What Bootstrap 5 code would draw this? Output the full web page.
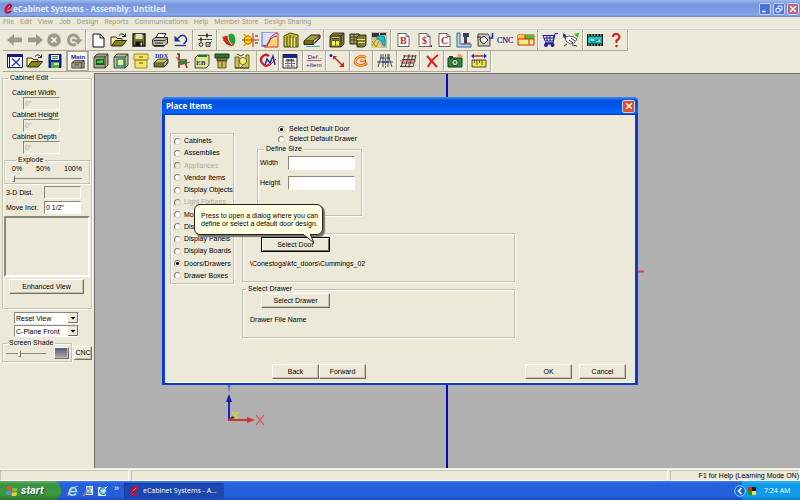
<!DOCTYPE html>
<html lang="en">
<head>
<meta charset="utf-8">
<meta name="viewport" content="width=device-width, initial-scale=1">
<title>eCabinet Systems - Assembly: Untitled</title>
<link href="https://cdn.jsdelivr.net/npm/bootstrap@5.3.0/dist/css/bootstrap.min.css" rel="stylesheet">
<style>
:root{--face:#ece9d8;--shadow:#aca899;--dark:#716f64}
body{font:7px/10px "Liberation Sans",Arial,sans-serif;color:#000;background:var(--face)}
.app-ui{height:100vh}
button,input,select{font:inherit;color:inherit;border-radius:0}
.title-main{height:17px;padding:0 1px 0 4px;font:bold 8px/16px "Open Sans",sans-serif;color:#e3ecfc;background:linear-gradient(#9db9ea,#7795df 25%,#7e9ee6 75%,#86a7ec 88%,#6580ce)}
.title-main svg{width:9px;height:11px}
.cap-btn{width:12px;height:12px;padding:0;border:1px solid #c5d3f5;border-radius:2px;background:#4a72dc;line-height:0}
.cap-btn svg{width:10px;height:10px}
.cap-close{background:#b26a7c}
.cap-set{gap:2px}
.menus{height:13px;padding-left:3px;gap:6px;font:7px/11px "Roboto",sans-serif;border-bottom:1px solid #c9d3de}
.menus a{color:#9d9a8c;text-decoration:none}
.tools{height:21px;padding-left:3px}
.tools + .tools{height:22px}
.grp{height:21px;padding:0 1px 0 2px;border-right:1px solid var(--shadow);border-bottom:1px solid var(--shadow);box-shadow:1px 0 #fff;display:flex;align-items:center}
.grp button{flex:1 1 0;min-width:0;padding:0;border:0;background:none;line-height:0;display:flex;justify-content:center;align-items:center}
.grp svg{width:18px;height:16px;flex:none}
.w22{width:22px}.w24{width:24px}.w44{width:45px}.w64{width:64px}.w67{width:67px}.w83{width:83px}.w107{width:107px}.w147{width:147px}.w168{width:168px}.w212{width:212px}
.w212 .grp{flex:1 1 0;min-width:0;padding:0 1px}
.on-btn{background:#f8f7f0 !important;border:1px solid var(--shadow) !important;height:20px}
.work{min-height:0}
.side{width:94px;flex:none;padding:1px 2px 0}
.etch{border:1px solid #c4c1b2;box-shadow:1px 1px #fff,inset 1px 1px #fff;margin:0;padding:0;min-width:0}
.etch > legend{float:none;width:auto;font-size:7px;line-height:8px;margin:0 0 0 4px;padding:0 2px}
.sunk{border:1px solid;border-color:#8b887b #fff #fff #8b887b;background:#fff;height:13px;padding:0 1px;min-width:0;border-radius:0}
.sunk:disabled{background:var(--face);color:#aca899;opacity:1}
.dim-box{width:37px}
.push{border:1px solid;border-color:#fff #716f64 #716f64 #fff;box-shadow:inset -1px -1px #c4c0b0;background:var(--face);height:15px;padding:0;line-height:12px;text-align:center}
.edit-set{padding:6px 1px 14px}
.dims{padding-left:8px}
.dims label{line-height:9px}
.dims .dim-box{margin-left:11px}
.explode{margin-top:2px;padding:0 7px 1px}
.explode .slide{width:70px}
.line{display:flex;justify-content:space-between;padding:0 9px 0 2px;margin-top:2px;line-height:13px}
.preview-box{height:61px;margin:2px 0;border:2px solid;border-color:#8b887b #fff #fff #8b887b}
.w-enh{width:75px;margin:2px 0 0 5px}
.combos{width:65px;margin:3px 0 0 12px;gap:1px}
.combo{position:relative;height:12px}
.combo select{appearance:none;width:100%;height:12px;border:1px solid;border-color:#8b887b #fff #fff #8b887b;background:#fff;padding:0 0 0 1px;line-height:9px;display:block}
.combo svg{position:absolute;right:1px;top:1px;width:10px;height:10px;pointer-events:none}
.slide{appearance:none;height:8px;margin:0;background:linear-gradient(#8b887b,#8b887b) 0 50%/100% 1px no-repeat;display:block}
.slide::-webkit-slider-thumb{appearance:none;width:3px;height:7px;background:var(--face);border:1px solid;border-color:#fff #716f64 #716f64 #fff}
.shade-row{margin-top:2px;gap:2px}
.shade{width:70px}
.shade > div{padding:0 2px 2px 3px;gap:8px}
.shade .slide{width:40px}
.cnc-btn{width:18px;height:14px;margin-bottom:2px}
.swatch{width:17px;height:12px;background:linear-gradient(#5b5b73,#a9a9b4)}
.view3d{background:#b0b0b0;border-left:1px solid #716f64;border-top:1px solid #716f64;position:relative;overflow:hidden;margin-bottom:1px}
.scene{position:absolute;inset:0;width:100%;height:100%}
.dlg{position:absolute;left:67px;top:23px;width:476px;border:solid #0b3bd0;border-width:0 3px 2px;border-radius:5px 5px 0 0;background:var(--face);box-shadow:inset 0 -1px #fff}
.dlg-title{height:18px;margin:0 -3px;padding:0 3px 0 4px;border-radius:5px 5px 0 0;background:linear-gradient(#3d8cf8,#0450dc 20%,#0357ee 60%,#0465fd 88%,#0338b8);color:#fff;font:bold 8px/18px "Open Sans",sans-serif}
.dlg-title .cap-btn{width:13px;height:13px;background:#df4f2c}
.dlg-body{padding:9px 9px 4px 5px}
.kinds{width:64px;height:151px;margin-top:9px;padding:2px 0 2px 3px;flex:none}
.opt{display:flex;align-items:center;gap:4px;white-space:nowrap;height:10px}
.opt input{appearance:none;width:7px;height:7px;margin:0;border:1px solid;border-color:#807d70 #d8d5c6 #d8d5c6 #807d70;border-radius:50%;background:#fff;flex:none}
.opt input:checked{background:radial-gradient(circle,#000 0 1px,#fff 2px)}
.opt input:disabled{background:var(--face)}
.opt input:disabled + span{color:#aca899}
.kinds .opt{gap:3px}
.pick-top{padding-left:36px}
.size-set{width:105px;height:67px;margin:1px 0 0 15px;padding-left:2px}
.sz{padding-top:6px}
.size-set .sz:first-of-type{padding-top:3px}
.wid-lab{width:28px}
.size-in{width:67px;height:14px}
.size-set{height:71px}
.file-set{width:273px;height:53px;padding-left:7px}
.file-set > legend{margin-left:-4px}
.file-set .push{width:69px;margin-left:11px;display:block}
.door-set{margin-top:13px}
.drawer-set{margin-top:3px}
.file-set .fname{margin-top:7px;line-height:10px}
.focus-push{border:1px solid #000;box-shadow:inset 1px 1px #fff,inset -1px -1px #716f64}
.foot{padding-left:102px;margin-top:26px}
.foot .push{width:47px}
.last-push{margin-left:7px}
.tip{position:absolute;left:99px;top:130px;width:129px}
.tip p{background:#ffffe1;border:1px solid #222;border-radius:6px;padding:7px 5px 5px 6px;line-height:8px;box-shadow:2px 2px 1px #77746a;font-size:7px;height:31px;white-space:nowrap}
.tip svg{position:absolute;left:108px;top:29px;width:16px;height:12px}
.status{height:12px;line-height:10px;border-top:1px solid #fff;gap:2px}
.status > div{border:1px solid;border-color:#c4c1b2 #fff #fff #c4c1b2}
.st-a{width:129px}.st-c{width:130px}
.taskbar{height:19px;background:linear-gradient(#3f7eee,#2560dd 15%,#245edb 80%,#1c48b8);color:#fff}
.start{width:61px;height:19px;border:0;padding:0 0 0 6px;border-radius:0 8px 8px 0;background:linear-gradient(#66b063,#3b9140 20%,#3d9a3f 70%,#2c7430);color:#fff;font:italic bold 11px/17px "Roboto",sans-serif;text-shadow:1px 1px 1px #1d4f20;gap:3px}
.start svg{width:12px;height:12px}
.quick{width:63px;padding-left:6px;gap:3px}
.quick button{border:0;padding:0;background:none;line-height:0}
.quick svg{width:12px;height:12px}
.quick span{font-size:9px;margin:-5px 0 0 2px}
.task{width:100px;height:16px;border:0;border-radius:2px;background:#1b47ae;color:#fff;box-shadow:inset 1px 1px #163a92;font:7px/14px "Open Sans",sans-serif;padding:0 0 0 6px}
.task svg{width:9px;height:11px}
.tray{width:58px;background:linear-gradient(#2cb6f6,#119ae9 20%,#109be9 80%,#0d7cc6);font:7px/18px "Open Sans",sans-serif;margin-left:auto}
.tray svg{width:24px;height:14px;margin-left:-8px}
.tray span{margin-left:6px}
</style>
<script src="https://cdn.jsdelivr.net/npm/bootstrap@5.3.0/dist/js/bootstrap.bundle.min.js"></script>
</head>
<body>
<svg class="d-none" aria-hidden="true">
<symbol id="logo" viewBox="0 0 9 11"><path d="M2.500 6Q7.500 5 7 2.500Q6 .5 3.500 3Q.5 6.500 2 9Q4 10.500 7 8" fill="none" stroke="#d4102c" stroke-width="2.200"/><path d="M3.500 5.500L6 3" stroke="#fff" stroke-width=".6"/></symbol>
<symbol id="back" viewBox="0 0 18 16"><path d="M1 8L8 2V5.500H16V10.500H8V14Z" fill="#9d9a8c"/><path d="M8 14.500V11H16.500" stroke="#fff" fill="none" stroke-width=".7"/></symbol>
<symbol id="fwd" viewBox="0 0 18 16"><path d="M17 8L10 2V5.500H2V10.500H10V14Z" fill="#9d9a8c"/><path d="M2 11H10" stroke="#fff" stroke-width=".7"/></symbol>
<symbol id="stop" viewBox="0 0 18 16"><circle cx="9" cy="8" r="6.800" fill="#9d9a8c"/><path d="M6.500 5.500L11.500 10.500M11.500 5.500L6.500 10.500" stroke="#fff" stroke-width="1.700"/></symbol>
<symbol id="again" viewBox="0 0 18 16"><path d="M13.500 8A5 5 0 1 0 11 12.300" fill="none" stroke="#9d9a8c" stroke-width="3"/><path d="M8 7.500H18L13 12.500Z" fill="#9d9a8c"/><circle cx="8.500" cy="8" r="1.500" fill="#9d9a8c"/></symbol>
<symbol id="new" viewBox="0 0 18 16"><path d="M4 2H11L15 6V15H4Z" fill="#fff"/><path d="M4 15V2H11M11 2V6H15M15 6V15H4" fill="none" stroke="#111"/><path d="M11 2L15 6" stroke="#111"/></symbol>
<symbol id="open" viewBox="0 0 18 16"><path d="M1 14V5H6L7 6.500H12V9" fill="#f4ef8a" stroke="#333"/><path d="M1.500 14L5.500 8.500H16.500L12 14Z" fill="#8c8414" stroke="#222"/><path d="M9 3.500Q12 0 15 4M15.500 1.500V4.500H12" fill="none" stroke="#222"/></symbol>
<symbol id="save" viewBox="0 0 18 16"><path d="M3 2H15V14H3Z" fill="#77771a" stroke="#111" stroke-width="1.300"/><path d="M5.500 2H12.500V7H5.500Z" fill="#dcdcc8"/><path d="M5.500 9.500H13V14H5.500Z" fill="#111"/><path d="M10.500 10.500H12V13.500H10.500Z" fill="#eee"/></symbol>
<symbol id="print" viewBox="0 0 18 16"><path d="M5 6L7 1.500H15L12.500 6.500" fill="#fff" stroke="#333"/><path d="M1.500 8L4 5.500H16.500V11L14 13.500H2Z" fill="#bbb8a8" stroke="#222"/><path d="M3 8.500H14L16 6.500M4 11H12" stroke="#333" fill="none"/><path d="M10 9.500H12" stroke="#dc3"/><path d="M3 14.500H13" stroke="#555"/></symbol>
<symbol id="undo" viewBox="0 0 18 16"><path d="M4 8L8.500 4Q12 2 14 5.500T11.500 12" fill="none" stroke="#17349b" stroke-width="1.500"/><path d="M2.500 3.500V9.500H8.500Z" fill="#17349b"/><path d="M3 13.500H14" stroke="#17349b" stroke-width="1.300"/></symbol>
<symbol id="checks" viewBox="0 0 18 16"><path d="M2 3.500H16M2 7.500H16" stroke="#222" stroke-width=".8"/><path d="M11 1.500V5.500M5 5.500V9.500" stroke="#222" stroke-width="1.600"/><circle cx="5" cy="12.500" r="1.800" fill="none" stroke="#222"/><path d="M10 10.500H14V14.500H10Z" fill="none" stroke="#222" stroke-width=".8"/><path d="M10.500 12L12 13.500L15.500 9.500" fill="none" stroke="#222" stroke-width=".8"/></symbol>
<symbol id="palette" viewBox="0 0 18 16"><path d="M2 5L9 3L15 11L13 14Q9 14 6 12Z" fill="#e02a22"/><path d="M3 8L12 14M5 6L13 12" stroke="#921511" stroke-width=".7"/><path d="M8 3Q12 0 14 3T15 11L12 13Q7 8 8 3Z" fill="#20a32f"/><path d="M8 3Q7 8 12 13" stroke="#fff" stroke-width=".8" fill="none"/></symbol>
<symbol id="snap" viewBox="0 0 18 16"><circle cx="7" cy="8" r="4" fill="#ffd800" stroke="#a77c00"/><path d="M3 2Q4 5 8 3.500M3 14Q4 11 8 12.500" fill="none" stroke="#e0a000" stroke-width="1.500"/><path d="M1 8H18M12 1V15" stroke="#d52422"/><path d="M14 4H17M14 11H17" stroke="#222"/></symbol>
<symbol id="curve" viewBox="0 0 18 16"><path d="M1 0H17V15H1Z" fill="#dfe2ff"/><path d="M4 15Q5 6 17 2V15Z" fill="#f8d675"/><path d="M1 15V0H17" fill="none" stroke="#5c64d8"/><path d="M2 14Q9 13 9 8T17 1" fill="none" stroke="#ce3030"/><path d="M1 14H6Q8 5 16 4" fill="none" stroke="#444be0"/><path d="M17 1V15H3" fill="none" stroke="#d33"/></symbol>
<symbol id="crown" viewBox="0 0 18 16"><path d="M2 4L8 1L16 3V15H2Z" fill="#c8c044" stroke="#4a4610"/><path d="M5 4V15M8 3V15M11 4V15M14 5V15" stroke="#4a4610"/><path d="M9.500 6V15M12.500 6V15" stroke="#f4ed73" stroke-width="1.300"/></symbol>
<symbol id="board" viewBox="0 0 18 16"><path d="M1 9L8 3H17L10 9Z" fill="#a3a135" stroke="#222"/><path d="M1 9V12.500H10V9M10 12.500L17 6V3" fill="#6f6c18" stroke="#222"/><path d="M3 14.500H17" stroke="#3aa7a1"/></symbol>
<symbol id="cabA" viewBox="0 0 18 16"><path d="M2 4L5 1H16V12L13 15H2Z" fill="#7d7a2c" stroke="#111" stroke-width=".8"/><path d="M2 4H13V15M13 4L16 1M4 6.500H11M4 9H11" fill="none" stroke="#222" stroke-width=".8"/><path d="M4 5.500H11" stroke="#ccca7b"/><path d="M4 9H7V13.500H4ZM8 9H11V13.500H8Z" fill="#f4ed52"/></symbol>
<symbol id="cabB" viewBox="0 0 18 16"><path d="M1 2H10V12H1Z" fill="#a5a04b" stroke="#222"/><path d="M1 5H10M1 8H10M5 2V12" stroke="#222" stroke-width=".7"/><path d="M8 5L10 3H17V13L15 15H8Z" fill="#807b29" stroke="#111" stroke-width=".8"/><path d="M8 7.500H16M9 10.500H16" stroke="#ebe78b"/></symbol>
<symbol id="render" viewBox="0 0 18 16"><path d="M1 0H17V16H1Z" fill="#bdbcb2"/><path d="M2 1H9V5H2ZM10 1H16V3H10Z" fill="#333"/><path d="M7 4H14Q16 7 15 14Q12 14 12 9Q9 8 7 8Z" fill="#24bdc5" stroke="#13656c" stroke-width=".6"/><path d="M1 8H9L12 16H1Z" fill="#e0d276"/><path d="M2 9L6 15M6 8L2 14M9 9L6 15" stroke="#7a6d20" stroke-width=".7"/></symbol>
<symbol id="page" viewBox="0 0 18 16"><path d="M4 1.500H12L15 4.500V14.500H4Z" fill="#fff" stroke="#444" stroke-width=".8"/><path d="M12 1.500V4.500H15" fill="none" stroke="#444" stroke-width=".8"/></symbol>
<symbol id="ruler" viewBox="0 0 18 16"><path d="M2 1H5V12H16V15H2Z" fill="#9fe5e5" stroke="#203c8b" stroke-width=".8"/><path d="M8 1H14V5H12V11H9V5H8Z" fill="#374255"/><path d="M7 12L15 11" stroke="#c02c2c"/></symbol>
<symbol id="mach" viewBox="0 0 18 16"><path d="M2 2H12L14 5V14H2Z" fill="#c8c8c0" stroke="#222" stroke-width=".8"/><path d="M1 5H5M4 7L8 4L12 8L8 12L5 10Z" stroke="#222" fill="#eee"/><path d="M13 6H16.500V1" stroke="#1731b2" stroke-width="1.600" fill="none"/></symbol>
<symbol id="nest" viewBox="0 0 18 16"><path d="M1 3H17V13H1Z" fill="#f7ee83" stroke="#c72a1d"/><path d="M8 3H17V7H8Z" fill="#37cf25"/><path d="M1 3H8V7H1Z" fill="#ffc83c"/><path d="M1 7H17M8 3V7M12 7V13" stroke="#d1261a"/></symbol>
<symbol id="cart" viewBox="0 0 18 16"><path d="M2 3.500H13L12 9H4Z" fill="#e9ebfa" stroke="#1a1b9b"/><path d="M17 1.500H14L12 11H4M3 6H13M6 3V9M9 3V9" fill="none" stroke="#1a1b9b"/><path d="M4 11.500H12" stroke="#1a1b9b" stroke-width="2"/><circle cx="5" cy="13" r="2" fill="#1a1b9b"/><circle cx="11.500" cy="13" r="2" fill="#1a1b9b"/></symbol>
<symbol id="shake" viewBox="0 0 18 16"><path d="M3 5L7 4L12 5L15 7L12 11L8 12L4 9Z" fill="#fff" stroke="#333" stroke-width=".8"/><path d="M7 8L11 11M9 6L13 9M2 14L5 12M10 13L15 14" stroke="#333"/><path d="M1 1L4 3V7L1 5Z" fill="#1a3fae"/><path d="M12 2L17 1L16 6Z" fill="#2ab532"/></symbol>
<symbol id="film" viewBox="0 0 18 16"><path d="M1 2H17V14H1Z" fill="#0b1514"/><path d="M2 4.500H16V11.500H2Z" fill="#20bcb6"/><path d="M2 3H17M2 13H17" stroke="#ece9d8" stroke-dasharray="1.500 1.500"/><path d="M3 8Q6 5 8 8T14 7V10H5Z" fill="#72f1e8"/><path d="M4 9L7 10L12 8" stroke="#0b6865" fill="none"/></symbol>
<symbol id="help" viewBox="0 0 18 16"><path d="M6 5Q6 2 9 2T12.500 5Q12.500 7 9.500 8.500V11" fill="none" stroke="#d1201c" stroke-width="2"/><circle cx="9.500" cy="14" r="1.300" fill="#d1201c"/></symbol>
<symbol id="winx" viewBox="0 0 18 16"><path d="M1.500 1.500H16.500V14.500H1.500Z" fill="#fff" stroke="#16197d"/><path d="M1 1H17V4H1Z" fill="#16197d"/><path d="M3.500 4V14" stroke="#16197d"/><path d="M6 5.500L14 13M14 5.500L6 13" stroke="#2540d9" stroke-width="1.500"/></symbol>
<symbol id="saveb" viewBox="0 0 18 16"><path d="M3 1.500H15V14.500H3Z" fill="#1725b0" stroke="#151a65"/><path d="M5 2H13V7H5Z" fill="#eee"/><path d="M6 3.500H12M6 5.500H12" stroke="#379044"/><path d="M5 9H13V15H5Z" fill="#42b255"/><path d="M8 10H13V12H8Z" fill="#f2ed68"/></symbol>
<symbol id="mainc" viewBox="0 0 18 18"><path d="M2 11L5 8.500H16V17H2Z" fill="#a39f80" stroke="#222" stroke-width=".8"/><path d="M2 11H13V17M5 13.500H10M13 11L16 8.500" stroke="#222" fill="none" stroke-width=".8"/></symbol>
<symbol id="cabG" viewBox="0 0 18 16"><path d="M2 4L5 1H16V12L13 15H2Z" fill="#a4a084" stroke="#222" stroke-width=".8"/><path d="M2 4H13V15M13 4L16 1" fill="none" stroke="#222" stroke-width=".8"/><path d="M4 6H12V12H4Z" fill="#155d1c"/><path d="M5 8L11 7V10H5Z" fill="#39d342"/></symbol>
<symbol id="cabT" viewBox="0 0 18 16"><path d="M2 4L5 1H16V12L13 15H2Z" fill="#c1bd98" stroke="#222" stroke-width=".8"/><path d="M2 4H13V15M13 4L16 1" fill="none" stroke="#222" stroke-width=".8"/><path d="M5 6H12V13H5Z" fill="#f8ec86" stroke="#15938f" stroke-width="1.600"/></symbol>
<symbol id="drawer" viewBox="0 0 18 16"><path d="M2 1H16V7H2ZM3 7H15V15H3Z" fill="#f3e463" stroke="#9e8b25"/><path d="M7 4H11M7 10H11" stroke="#665811"/></symbol>
<symbol id="ddx" viewBox="0 0 18 16"><path d="M2 10L6 6H16L12 10Z" fill="#c5be6b" stroke="#222" stroke-width=".8"/><path d="M2 10V14H12V10M12 14L16 10V6" fill="#77702b" stroke="#222" stroke-width=".8"/></symbol>
<symbol id="chair" viewBox="0 0 18 16"><path d="M4 1H6V7H13V9H6V15M12 9L14 15" fill="none" stroke="#68472a" stroke-width="1.700"/><path d="M3 4L8 10M7 12L17 9" stroke="#db2424"/><path d="M7 9H14V11H7Z" fill="#248a32"/></symbol>
<symbol id="eb" viewBox="0 0 18 16"><path d="M2 5L5 2H16V12L13 15H2Z" fill="#e7e37e" stroke="#222" stroke-width=".8"/><path d="M5 3H14" stroke="#167c34" stroke-width="2"/></symbol>
<symbol id="stool" viewBox="0 0 18 16"><path d="M2 1H16V5H2Z" fill="#267431" stroke="#174318"/><path d="M4 5H14V8H4Z" fill="#81822a" stroke="#333" stroke-width=".8"/><path d="M5 8H13V15H5Z" fill="#cbbf42" stroke="#333" stroke-width=".8"/><path d="M9 9V14" stroke="#5d5618"/></symbol>
<symbol id="clock" viewBox="0 0 18 16"><path d="M2 4H6V15H2ZM13 2H16V15H7L13 9Z" fill="#cfc44f" stroke="#4c4610" stroke-width=".8"/><circle cx="10" cy="8" r="3.600" fill="#f5ec7f" stroke="#595010" stroke-width=".8"/><path d="M2 15H16M4 1L8 3L11 1" fill="none" stroke="#4c4610"/></symbol>
<symbol id="cm" viewBox="0 0 18 16"><path d="M10 3Q6 0 3 4T5 12Q8 14 10 11" fill="none" stroke="#d2182d" stroke-width="2.200"/><path d="M6 12L8 6L11 10L14 3L16 12" fill="none" stroke="#1827a5" stroke-width="1.400"/><path d="M10 13L17 6" stroke="#d2182d"/></symbol>
<symbol id="sheet" viewBox="0 0 18 16"><path d="M2 1.500H16V15H2Z" fill="#fff" stroke="#222"/><path d="M2 2H16V5H2Z" fill="#1b2490"/><path d="M4 8H14M4 10.500H14M4 13H14M7 6V14M10.500 6V14" stroke="#555" stroke-width=".8"/><path d="M5 7H13" stroke="#111"/></symbol>
<symbol id="defitem" viewBox="0 0 18 18"><path d="M1 8.500H17" stroke="#a5203b" stroke-width=".8"/></symbol>
<symbol id="move" viewBox="0 0 18 16"><path d="M6 4L15 13" stroke="#db2421" stroke-width="1.500"/><path d="M5 3H9L5 7ZM16 14H11L16 9Z" fill="#db2421"/><circle cx="3" cy="2.500" r="1.500" fill="#1a23b8"/></symbol>
<symbol id="ring" viewBox="0 0 18 16"><path d="M14 4.500Q9 2 5 5Q1 9 5 11.500Q11 14 15 10M8 8H14" fill="none" stroke="#d04018" stroke-width="2.600"/><path d="M14 4.500Q9 2 5 5Q1 9 5 11.500Q11 14 15 10M8 8H13" fill="none" stroke="#ffb638" stroke-width="1.500"/></symbol>
<symbol id="mirror" viewBox="0 0 18 16"><path d="M5 1V4L2 14M7 1V14M12 1V14M13 1V5L16 14M1 9H17M4 5H14" fill="none" stroke="#22263d" stroke-width=".8"/><path d="M9.500 1V15" stroke="#d62c2c" stroke-dasharray="3 1"/><path d="M6 9H12" stroke="#283fbd" stroke-width="1.500"/></symbol>
<symbol id="array" viewBox="0 0 18 16"><path d="M4 3H17M3 6.500H16M2 10H15M1 13.500H14M6 2L2 14M10 2L6 14M14 2L10 14M17 2L14 14" stroke="#333" stroke-width=".9"/><path d="M10 1V15M1 8H17" stroke="#d52b2c" stroke-width=".8"/></symbol>
<symbol id="del" viewBox="0 0 18 16"><path d="M4 3L14 14M15 2Q8 7 5 14" fill="none" stroke="#df201a" stroke-width="2"/></symbol>
<symbol id="camera" viewBox="0 0 18 16"><path d="M2 5H16V14H2Z" fill="#2c8b3a" stroke="#153d18"/><path d="M3 3H7V5H3Z" fill="#333"/><circle cx="9" cy="9.500" r="3.200" fill="#d5e4cf" stroke="#173c1d"/><circle cx="9" cy="9.500" r="1.200" fill="#287132"/><path d="M12 1L16 4M15 1L13 4M11 3H17" stroke="#e3922e"/></symbol>
<symbol id="dim" viewBox="0 0 18 16"><path d="M3 3H15" stroke="#d6221b" stroke-width="1.500"/><path d="M1 3L4 .5V5.500ZM17 3L14 .5V5.500Z" fill="#1b30c2"/><path d="M2 7H16V14H2Z" fill="#f1e840" stroke="#222" stroke-width=".8"/><path d="M4.500 7V10M7 7V12M9.500 7V10M12 7V12" stroke="#333" stroke-width=".8"/></symbol>
<symbol id="ex" viewBox="0 0 10 10"><path d="M2.200 2.200L7.800 7.800M7.800 2.200L2.200 7.800" stroke="#fff" stroke-width="1.500"/></symbol>
<symbol id="drop" viewBox="0 0 10 10"><path d="M0 0H10V10H0Z" fill="#ece9d8"/><path d="M9.500 0V9.500H0" fill="none" stroke="#716f64"/><path d="M2.500 4H7.500L5 6.500Z"/></symbol>
</svg>
<div class="app-ui d-flex flex-column">
<header>
 <div class="title-main d-flex align-items-center"><svg><use href="#logo"/></svg><span class="me-auto">eCabinet Systems - Assembly: Untitled</span>
 <div class="cap-set d-flex"><button class="cap-btn" aria-label="Minimize"><svg viewBox="0 0 10 10"><path d="M2 7.500H5.500" stroke="#fff" stroke-width="1.600"/></svg></button><button class="cap-btn" aria-label="Restore"><svg viewBox="0 0 10 10"><path d="M4 4V2H8V6H6M2 4.500H6V8H2Z" fill="none" stroke="#fff"/></svg></button><button class="cap-btn cap-close" aria-label="Close"><svg><use href="#ex"/></svg></button></div></div>
 <nav class="menus d-flex"><a href="#">File</a><a href="#">Edit</a><a href="#">View</a><a href="#">Job</a><a href="#">Design</a><a href="#">Reports</a><a href="#">Communications</a><a href="#">Help</a><a href="#">Member Store</a><a href="#">Design Sharing</a></nav>
 <div class="tools d-flex" role="toolbar" aria-label="Standard">
  <div class="grp w83"><button aria-label="Back"><svg><use href="#back"/></svg></button><button aria-label="Forward"><svg><use href="#fwd"/></svg></button><button aria-label="Stop"><svg><use href="#stop"/></svg></button><button aria-label="Refresh"><svg><use href="#again"/></svg></button></div>
  <div class="grp w107"><button aria-label="New"><svg><use href="#new"/></svg></button><button aria-label="Open"><svg><use href="#open"/></svg></button><button aria-label="Save"><svg><use href="#save"/></svg></button><button aria-label="Print"><svg><use href="#print"/></svg></button><button aria-label="Undo"><svg><use href="#undo"/></svg></button></div>
  <div class="grp w24"><button aria-label="Settings"><svg><use href="#checks"/></svg></button></div>
  <div class="grp w107"><button aria-label="Materials"><svg><use href="#palette"/></svg></button><button aria-label="Snap"><svg><use href="#snap"/></svg></button><button aria-label="Shape"><svg><use href="#curve"/></svg></button><button aria-label="Moulding"><svg><use href="#crown"/></svg></button><button aria-label="Board"><svg><use href="#board"/></svg></button></div>
  <div class="grp w67"><button aria-label="Cabinet"><svg><use href="#cabA"/></svg></button><button aria-label="Assembly"><svg><use href="#cabB"/></svg></button><button aria-label="Render"><svg><use href="#render"/></svg></button></div>
  <div class="grp w147">
   <button aria-label="Buy list"><svg viewBox="0 0 18 16" font-family="Liberation Serif" font-weight="bold" font-size="10" fill="#cc1e24"><use href="#page"/><text x="6" y="12">B</text></svg></button>
   <button aria-label="Pricing"><svg viewBox="0 0 18 16" font-family="Liberation Serif" font-weight="bold" font-size="10" fill="#cc1e24"><use href="#page"/><text x="7" y="12">$</text><path d="M15 15L17 13V15Z" fill="#000"/></svg></button>
   <button aria-label="Cut list"><svg viewBox="0 0 18 16" font-family="Liberation Serif" font-weight="bold" font-size="10" fill="#cc1e24"><use href="#page"/><text x="6" y="12">C</text></svg></button>
   <button aria-label="Dimensions"><svg><use href="#ruler"/></svg></button><button aria-label="Machine"><svg><use href="#mach"/></svg></button>
   <button aria-label="CNC output"><svg viewBox="0 0 18 16" font-family="Liberation Serif" font-size="8" fill="#101890" stroke="#101890" stroke-width=".2"><text x="1" y="11">CNC</text></svg></button>
   <button aria-label="Nesting"><svg><use href="#nest"/></svg></button></div>
  <div class="grp w44"><button aria-label="Store"><svg><use href="#cart"/></svg></button><button aria-label="Sharing"><svg><use href="#shake"/></svg></button></div>
  <div class="grp w44"><button aria-label="Video"><svg><use href="#film"/></svg></button><button aria-label="Help"><svg><use href="#help"/></svg></button></div>
 </div>
 <div class="tools d-flex" role="toolbar" aria-label="Design">
  <div class="grp w64"><button aria-label="Close view"><svg><use href="#winx"/></svg></button><button aria-label="Open item"><svg><use href="#open"/></svg></button><button aria-label="Save item"><svg><use href="#saveb"/></svg></button></div>
  <div class="grp w22 p-0"><button class="on-btn" aria-label="Main"><svg viewBox="0 0 18 18" font-family="Liberation Sans" font-weight="bold" font-size="7" fill="#1a27a5"><use href="#mainc"/><text x="1" y="7">Main</text></svg></button></div>
  <div class="grp w168 pe-1"><button aria-label="Cabinet interior"><svg><use href="#cabG"/></svg></button><button aria-label="Cabinet door"><svg><use href="#cabT"/></svg></button><button aria-label="Drawers"><svg><use href="#drawer"/></svg></button><button aria-label="DDX"><svg viewBox="0 0 18 16" font-family="Liberation Serif" font-weight="bold" font-size="6" fill="#1b2bae"><use href="#ddx"/><text x="3" y="5">DDX</text></svg></button><button aria-label="Furniture"><svg><use href="#chair"/></svg></button><button aria-label="Edge banding"><svg viewBox="0 0 18 16" font-family="Liberation Serif" font-weight="bold" font-size="7" fill="#1b2bae"><use href="#eb"/><text x="3" y="12">EB</text></svg></button><button aria-label="Pedestal"><svg><use href="#stool"/></svg></button><button aria-label="Sweep"><svg><use href="#clock"/></svg></button></div>
  <div class="grp w22 p-0"><button aria-label="Cabinet maker"><svg><use href="#cm"/></svg></button></div>
  <div class="w212 d-flex">
   <div class="grp"><button aria-label="Schedule"><svg><use href="#sheet"/></svg></button></div>
   <div class="grp"><button aria-label="Define item"><svg viewBox="0 0 18 18" font-family="Liberation Sans" font-size="7" fill="#1a1d80"><text x="2" y="7">Def...</text><use href="#defitem"/><text x="0" y="16">+Item</text></svg></button></div>
   <div class="grp"><button aria-label="Move"><svg><use href="#move"/></svg></button></div>
   <div class="grp"><button aria-label="Rotate"><svg><use href="#ring"/></svg></button></div>
   <div class="grp"><button aria-label="Mirror"><svg><use href="#mirror"/></svg></button></div>
   <div class="grp"><button aria-label="Array"><svg><use href="#array"/></svg></button></div>
   <div class="grp"><button aria-label="Delete"><svg><use href="#del"/></svg></button></div>
   <div class="grp"><button aria-label="Snapshot"><svg><use href="#camera"/></svg></button></div>
   <div class="grp"><button aria-label="Measure"><svg><use href="#dim"/></svg></button></div>
  </div>
 </div>
</header>
<main class="work d-flex flex-grow-1">
 <aside class="side">
  <fieldset class="etch edit-set"><legend>Cabinet Edit</legend>
   <div class="dims d-flex flex-column">
    <label for="cw">Cabinet Width</label><input class="sunk dim-box" id="cw" value='0"' disabled>
    <label for="ch">Cabinet Height</label><input class="sunk dim-box" id="ch" value='0"' disabled>
    <label for="cd">Cabinet Depth</label><input class="sunk dim-box" id="cd" value='0"' disabled>
   </div>
   <fieldset class="etch explode"><legend>Explode</legend>
    <label for="ex-r" class="d-flex justify-content-between"><span>0%</span><span>50%</span><span>100%</span></label>
    <input type="range" class="slide" id="ex-r" value="0"></fieldset>
   <div class="line"><label for="d3">3-D Dist.</label><input class="sunk dim-box" id="d3" disabled></div>
   <div class="line"><label for="mi">Move Incr.</label><input class="sunk dim-box" id="mi" value='0 1/2"'></div>
   <div class="preview-box"></div>
   <button class="push w-enh d-block">Enhanced View</button>
  </fieldset>
  <div class="combos d-flex flex-column"><div class="combo"><select aria-label="View"><option>Reset View</option></select><svg><use href="#drop"/></svg></div><div class="combo"><select aria-label="Plane"><option>C-Plane Front</option></select><svg><use href="#drop"/></svg></div></div>
  <div class="d-flex align-items-end shade-row"><fieldset class="etch shade"><legend>Screen Shade</legend><div class="d-flex align-items-center"><input type="range" class="slide" value="32" aria-label="Screen shade"><button class="push swatch" aria-label="Shade color"></button></div></fieldset><button class="push cnc-btn">CNC</button></div>
 </aside>
 <section class="view3d flex-grow-1">
  <svg class="scene" aria-hidden="true"><path d="M352 0V396" stroke="#0707b8" stroke-width="2"/><path d="M543 197.500H549" stroke="#e04343" stroke-width="2"/><path d="M131.500 309L134 313L136.500 309M134 313V317" fill="none" stroke="#4648cf"/><path d="M134 327V345" stroke="#2222b8" stroke-width="2"/><path d="M134 320L137 328H131Z" fill="#1919aa"/><path d="M133 346H153" stroke="#d23535" stroke-width="2"/><path d="M160 346L152 343V349Z" fill="#d23535"/><path d="M137 339H143L138 343.500H143" fill="none" stroke="#d8d43f" stroke-width="1.400"/><path d="M135 345Q137 340 140 344Z" fill="#1f3018"/><path d="M161 341L169 351M169 341L161 351" stroke="#dc4b4b" stroke-width="1.200"/></svg>
  <div class="dlg" role="dialog" aria-label="Place Items">
   <div class="dlg-title d-flex align-items-center"><span class="me-auto">Place Items</span><button class="cap-btn" aria-label="Close dialog"><svg><use href="#ex"/></svg></button></div>
   <div class="dlg-body">
    <div class="d-flex">
     <div class="etch kinds d-flex flex-column justify-content-between">
      <label class="opt"><input type="radio" name="kind"><span>Cabinets</span></label>
      <label class="opt"><input type="radio" name="kind"><span>Assemblies</span></label>
      <label class="opt"><input type="radio" name="kind" disabled><span>Appliances</span></label>
      <label class="opt"><input type="radio" name="kind"><span>Vendor Items</span></label>
      <label class="opt"><input type="radio" name="kind"><span>Display Objects</span></label>
      <label class="opt"><input type="radio" name="kind" disabled><span>Light Fixtures</span></label>
      <label class="opt"><input type="radio" name="kind"><span>Mo</span></label>
      <label class="opt"><input type="radio" name="kind"><span>Dis</span></label>
      <label class="opt"><input type="radio" name="kind"><span>Display Panels</span></label>
      <label class="opt"><input type="radio" name="kind"><span>Display Boards</span></label>
      <label class="opt"><input type="radio" name="kind" checked><span>Doors/Drawers</span></label>
      <label class="opt"><input type="radio" name="kind"><span>Drawer Boxes</span></label>
     </div>
     <div class="ms-2">
      <div class="pick-top"><label class="opt"><input type="radio" name="def" checked><span>Select Default Door</span></label><label class="opt"><input type="radio" name="def"><span>Select Default Drawer</span></label></div>
      <fieldset class="etch size-set"><legend>Define Size</legend>
       <div class="d-flex align-items-center sz"><label class="wid-lab" for="w">Width</label><input class="sunk size-in" id="w"></div>
       <div class="d-flex align-items-center sz"><label class="wid-lab" for="h">Height</label><input class="sunk size-in" id="h"></div>
      </fieldset>
      <fieldset class="etch file-set door-set"><legend>Select Door</legend><button class="push focus-push">Select Door</button><div class="fname">\Conestoga\kfc_doors\Cummings_02</div></fieldset>
      <fieldset class="etch file-set drawer-set"><legend>Select Drawer</legend><button class="push">Select Drawer</button><div class="fname">Drawer File Name</div></fieldset>
     </div>
    </div>
    <div class="foot d-flex"><button class="push">Back</button><button class="push">Forward</button><button class="push ms-auto">OK</button><button class="push last-push">Cancel</button></div>
   </div>
  </div>
  <div class="tip" role="tooltip"><p class="m-0">Press to open a dialog where you can<br>define or select a default door design.</p><svg viewBox="0 0 16 12"><path d="M1 1L12 10L8 1" fill="#ffffe1" stroke="#222"/><path d="M2 1H8" stroke="#ffffe1" stroke-width="2"/></svg></div>
 </section>
</main>
<footer>
 <div class="status d-flex"><div class="st-a"></div><div class="flex-grow-1"></div><div class="st-c text-end text-nowrap">F1 for Help (Learning Mode ON)</div></div>
 <div class="taskbar d-flex align-items-center">
  <button class="start d-flex align-items-center"><svg viewBox="0 0 12 12"><path d="M1 2Q3 .5 5.500 2L5 5.500Q3 4 .5 5.500Z" fill="#ef5327"/><path d="M6.500 2.500Q9 4 11.500 2.500L11 6Q8.500 7 6 6Z" fill="#74c74a"/><path d="M.5 6.500Q3 5 5 6.500L4.500 10Q2 8.500 0 10Z" fill="#5a8ff0"/><path d="M6 7Q8.500 8 11 7L10.500 10.500Q8 12 5.500 10.500Z" fill="#f8cc30"/></svg>start</button>
  <div class="quick d-flex align-items-center">
   <button aria-label="Browser"><svg viewBox="0 0 12 12"><path d="M3 6.500H9.500Q9 2.500 6 2.500T2.500 6.500T6 10Q8 10 9 8.500" fill="none" stroke="#9fe0ff" stroke-width="1.700"/><path d="M1 11Q0 8 5 4T11 2" fill="none" stroke="#ffdf71" stroke-width=".8"/></svg></button>
   <button aria-label="Search"><svg viewBox="0 0 12 12"><path d="M4 1H11V10H4Z" fill="#dfe8fa"/><path d="M5 3H10M5 8.500H10" stroke="#5675b5"/><circle cx="6" cy="6" r="2.200" fill="#a8d3fa" stroke="#506ba8"/><path d="M4.500 7.500L1 11" stroke="#d98657" stroke-width="1.500"/></svg></button>
   <button aria-label="Mail"><svg viewBox="0 0 12 12"><path d="M1 2H9V11H1Z" fill="#d9eafc"/><circle cx="6" cy="6" r="3.500" fill="#79c5ef" stroke="#2470bb"/><path d="M5 7L11 1M4 5L6 7L9 5" stroke="#fff" fill="none"/></svg></button>
   <span>»</span></div>
  <button class="task d-flex align-items-center gap-1"><svg><use href="#logo"/></svg><span>eCabinet Systems - A...</span></button>
  <div class="tray d-flex align-items-center align-self-stretch"><svg viewBox="0 0 24 14"><circle cx="6" cy="7" r="5.300" fill="#1764d8" stroke="#93cdf9"/><path d="M7.500 4L4.500 7L7.500 10" fill="none" stroke="#fff" stroke-width="1.600"/><path d="M14 3H18V7H14Z" fill="#d92b25"/><path d="M18 3H22V7H18Z" fill="#111"/><path d="M14 7H18V11H14Z" fill="#159b34"/><path d="M18 7H22V11H18Z" fill="#f2dc3b"/></svg><span class="text-nowrap">7:24 AM</span></div>
 </div>
</footer>
</div>
</body>
</html>
